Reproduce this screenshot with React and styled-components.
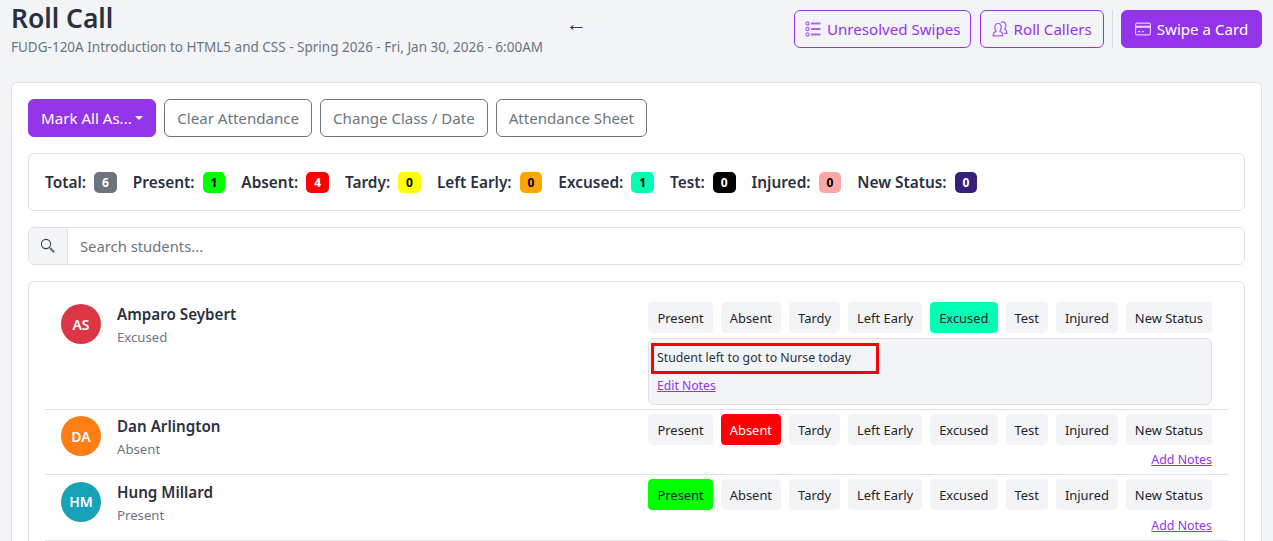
import React from 'react';
import styled, { createGlobalStyle } from 'styled-components';

const purple = '#9333ea';
const FONT = '"Noto Sans", "Open Sans", sans-serif';

const Global = createGlobalStyle`
  html, body { margin: 0; padding: 0; height: 541px; overflow: hidden; background: #f3f4f8; }
  body { font-family: ${FONT}; color: #2b3040; font-size: 15.1px; }
  * { box-sizing: border-box; }
`;

const Page = styled.div`padding: 0 11px;`;
const Header = styled.header`display: flex; align-items: flex-start; height: 82px;`;
const TitleBlock = styled.div`width: 552px; flex-shrink: 0;`;
const Title = styled.h1`margin: 0; font-size: 26.4px; line-height: 36px; font-weight: 600; color: #2b3040;`;
const Subtitle = styled.p`margin: 1px 0 0; font-size: 13.5px; line-height: 20px; color: #6c757d; white-space: nowrap;`;
const BackArrow = styled.span`margin-left: 3px; margin-top: 9px; font-size: 21px; line-height: 30px; color: #3a3f4c; font-family: "Liberation Sans", sans-serif;`;
const HeaderActions = styled.div`display: flex; align-items: center; gap: 8.2px; margin: 10px 0 0 auto;`;
const Divider = styled.div`width: 1px; height: 38px; background: #d9dbe2;`;
const HeaderButton = styled.button`
  display: inline-flex; align-items: center; justify-content: center; gap: 6px; height: 38px; width: ${p => p.$w}px; padding: 0; white-space: nowrap;
  font: 400 15.1px ${FONT}; border-radius: 6px; border: 1px solid ${purple};
  background: ${p => p.$solid ? purple : 'transparent'}; color: ${p => p.$solid ? '#fff' : purple};
`;
const IconSvg = styled.svg`width: 16px; height: 16px; flex-shrink: 0; opacity: .75;`;

const MainCard = styled.section`
  background: #fff; border: 1px solid #dee2e6; border-radius: 6px; padding: 16px; height: 520px;
  display: flex; flex-direction: column; gap: 16px;
`;
const Toolbar = styled.div`display: flex; gap: 8px;`;
const ToolButton = styled.button`
  height: 38px; padding: 0 12px; font: 400 15.1px ${FONT}; border-radius: 6px; color: #6c757d; white-space: nowrap;
  background: #fff; border: 1px solid #6c757d;
`;
const DropButton = styled(ToolButton)`
  background: ${purple}; border-color: ${purple}; color: #fff; display: inline-flex; align-items: center;
  &::after { content: ''; margin-left: 3.5px; border-top: 4.8px solid #fff; border-left: 4.8px solid transparent; border-right: 4.8px solid transparent; }
`;
const StatsCard = styled.div`
  border: 1px solid #dee2e6; border-radius: 6px; height: 58px; padding: 0 16px;
  display: flex; align-items: center; gap: 16px;
`;
const Stat = styled.div`display: flex; align-items: center; gap: 8px; font-weight: 600; font-size: 15.4px; color: #2b3040;`;
const Badge = styled.span`
  display: inline-flex; align-items: center; justify-content: center; height: 21px; min-width: 22.75px; padding: 0 7px;
  border-radius: 5px; font-size: 12px; font-weight: 700; background: ${p => p.$bg}; color: ${p => p.$fg};
`;
const SearchGroup = styled.div`display: flex; height: 38px; border: 1px solid #dee2e6; border-radius: 6px; overflow: hidden;`;
const SearchAddon = styled.span`
  width: 39px; background: #f3f4f8; border-right: 1px solid #dee2e6; display: flex; align-items: center; justify-content: center; color: #3a3f4c;
`;
const SearchInput = styled.input`
  flex: 1; border: 0; outline: 0; padding: 0 12px; font: 400 14.8px ${FONT}; color: #2b3040;
  &::placeholder { color: #6c757d; opacity: 1; }
`;
const ListCard = styled.div`border: 1px solid #dee2e6; border-radius: 6px; padding: 0 16px; flex: 1;`;
const Row = styled.div`
  display: flex; justify-content: space-between; border-bottom: 1px solid #dee2e6;
  padding: ${p => p.$first ? '20px 16px 4px' : '4px 16px 5px'};
`;
const Person = styled.div`display: flex; gap: 16px; padding-top: ${p => p.$pad}px;`;
const Avatar = styled.div`
  width: 40px; height: 40px; border-radius: 50%; background: ${p => p.$bg}; color: #fff; font-weight: 600; font-size: 14px;
  display: flex; align-items: center; justify-content: center;
`;
const Name = styled.div`font-size: 15.2px; line-height: 20px; font-weight: 600; color: #2b3040;`;
const Status = styled.div`font-size: 13.2px; line-height: 20px; color: #6c757d; margin-top: 3px;`;
const RightCol = styled.div`width: 564px; display: flex; flex-direction: column;`;
const StatusRow = styled.div`display: flex; gap: 8px; justify-content: flex-end;`;
const StatusButton = styled.button`
  height: 31px; padding: 0 8px; border: 1px solid ${p => p.$bg || '#f3f4f8'}; border-radius: 4px;
  background: ${p => p.$bg || '#f3f4f8'}; color: ${p => p.$fg || '#212529'}; font: 400 12.92px ${FONT}; white-space: nowrap;
`;
const NotesBox = styled.div`
  margin-top: 5px; height: 67px; background: #f3f4f8; border: 1px solid #dee2e6; border-radius: 6px; padding: 4px 2px;
`;
const NoteText = styled.div`
  width: 228px; height: 31px; border: 3px solid #f00; padding: 0 3px; font-size: 12.3px; line-height: 23px; color: #2b3040; white-space: nowrap;
`;
const NoteLink = styled.a`display: inline-block; margin: 1px 0 0 6px; font-size: 12.2px; line-height: 18px; color: ${purple}; text-decoration: underline;`;
const AddLink = styled.a`align-self: flex-end; margin-top: ${p => p.$gap}px; font-size: 12.4px; line-height: 18px; color: ${purple}; text-decoration: underline;`;

const statuses = ['Present', 'Absent', 'Tardy', 'Left Early', 'Excused', 'Test', 'Injured', 'New Status'];
const activeColors = {
  Present: { bg: '#00ff00', fg: '#212529' },
  Absent: { bg: '#ff0000', fg: '#fff' },
  Excused: { bg: '#00ffb3', fg: '#212529' },
};
const stats = [
  ['Total', 6, '#6c757d', '#fff'], ['Present', 1, '#00ff00', '#000'], ['Absent', 4, '#ff0000', '#fff'],
  ['Tardy', 0, '#ffff00', '#000'], ['Left Early', 0, '#ffa500', '#000'], ['Excused', 1, '#00ffb3', '#000'],
  ['Test', 0, '#000', '#fff'], ['Injured', 0, '#ffa6a6', '#000'], ['New Status', 0, '#371f7a', '#fff'],
];
const students = [
  { initials: 'AS', name: 'Amparo Seybert', status: 'Excused', bg: '#dc3545', pad: 2, note: 'Student left to got to Nurse today' },
  { initials: 'DA', name: 'Dan Arlington', status: 'Absent', bg: '#fd7e14', pad: 2, linkGap: 6 },
  { initials: 'HM', name: 'Hung Millard', status: 'Present', bg: '#17a2b8', pad: 2.7, linkGap: 7 },
];

const SearchIcon = () => (
  <svg width="16" height="16" viewBox="0 0 16 16" fill="none" stroke="currentColor">
    <circle cx="6" cy="6" r="4.6" strokeWidth="1.1" />
    <path d="M9.4 9.4l1.2 1.2" strokeWidth="1" />
    <path d="M10.6 10.6l3 3" strokeWidth="2.2" strokeLinecap="round" opacity=".7" />
  </svg>
);
const ListIcon = () => (
  <IconSvg viewBox="0 0 16 16" fill="none" stroke="currentColor">
    <circle cx="2.5" cy="2.5" r="1.6" strokeWidth="1.2" />
    <circle cx="2.5" cy="8" r="1.6" strokeWidth="1.2" />
    <circle cx="2.5" cy="13.5" r="1.6" strokeWidth="1.2" />
    <path d="M6 2.5h9.5M6 8h9.5M6 13.5h9.5" strokeWidth="1.8" />
  </IconSvg>
);
const PeopleIcon = () => (
  <IconSvg viewBox="0 0 16 16" fill="none" stroke="currentColor" strokeWidth="1.3">
    <path d="M10.7 14.8H1.2v-1.5c0-1.7 2.1-2.5 3-3.2-.8-.8-1.4-2-1.4-3.6 0-2.3 1.1-4.2 3.2-4.2s3.2 1.9 3.2 4.2c0 1.6-.6 2.8-1.4 3.6.9.7 2.9 1.5 2.9 3.2z" />
    <path d="M9.2 1.5c.4-.4 1-.6 1.6-.6 2 0 3 1.8 3 3.9 0 1.5-.5 2.6-1.2 3.3.9.6 2.2 1.2 2.2 2.9v1.3h-2.8" />
  </IconSvg>
);
const CardIcon = () => (
  <IconSvg viewBox="0 0 16 16" fill="none" stroke="currentColor" strokeWidth="1.1">
    <rect x="0.6" y="2.1" width="14.8" height="11.8" rx="1.6" />
    <path d="M.6 5.8h14.8" strokeWidth="2.2" />
    <path d="M3 10.6h2.6M7 10.6h1.8" strokeWidth="1.2" />
  </IconSvg>
);

export default function App() {
  return (
    <Page>
      <Global />
      <Header>
        <TitleBlock>
          <Title>Roll Call</Title>
          <Subtitle>FUDG-120A Introduction to HTML5 and CSS - Spring 2026 - Fri, Jan 30, 2026 - 6:00AM</Subtitle>
        </TitleBlock>
        <BackArrow>←</BackArrow>
        <HeaderActions>
          <HeaderButton $w={177.4}><ListIcon />Unresolved Swipes</HeaderButton>
          <HeaderButton $w={124}><PeopleIcon />Roll Callers</HeaderButton>
          <Divider />
          <HeaderButton $w={141} $solid><CardIcon />Swipe a Card</HeaderButton>
        </HeaderActions>
      </Header>
      <MainCard>
        <Toolbar>
          <DropButton>Mark All As...</DropButton>
          <ToolButton>Clear Attendance</ToolButton>
          <ToolButton>Change Class / Date</ToolButton>
          <ToolButton>Attendance Sheet</ToolButton>
        </Toolbar>
        <StatsCard>
          {stats.map(([label, n, bg, fg]) => (
            <Stat key={label}>{label}:<Badge $bg={bg} $fg={fg}>{n}</Badge></Stat>
          ))}
        </StatsCard>
        <SearchGroup>
          <SearchAddon><SearchIcon /></SearchAddon>
          <SearchInput placeholder="Search students..." />
        </SearchGroup>
        <ListCard>
          {students.map((s, i) => (
            <Row key={s.name} $first={i === 0}>
              <Person $pad={s.pad}>
                <Avatar $bg={s.bg}>{s.initials}</Avatar>
                <div>
                  <Name>{s.name}</Name>
                  <Status>{s.status}</Status>
                </div>
              </Person>
              <RightCol>
                <StatusRow>
                  {statuses.map(st => {
                    const on = st === s.status ? activeColors[st] : null;
                    return <StatusButton key={st} $bg={on?.bg} $fg={on?.fg}>{st}</StatusButton>;
                  })}
                </StatusRow>
                {s.note ? (
                  <NotesBox>
                    <NoteText>{s.note}</NoteText>
                    <NoteLink href="#">Edit Notes</NoteLink>
                  </NotesBox>
                ) : (
                  <AddLink href="#" $gap={s.linkGap}>Add Notes</AddLink>
                )}
              </RightCol>
            </Row>
          ))}
        </ListCard>
      </MainCard>
    </Page>
  );
}
